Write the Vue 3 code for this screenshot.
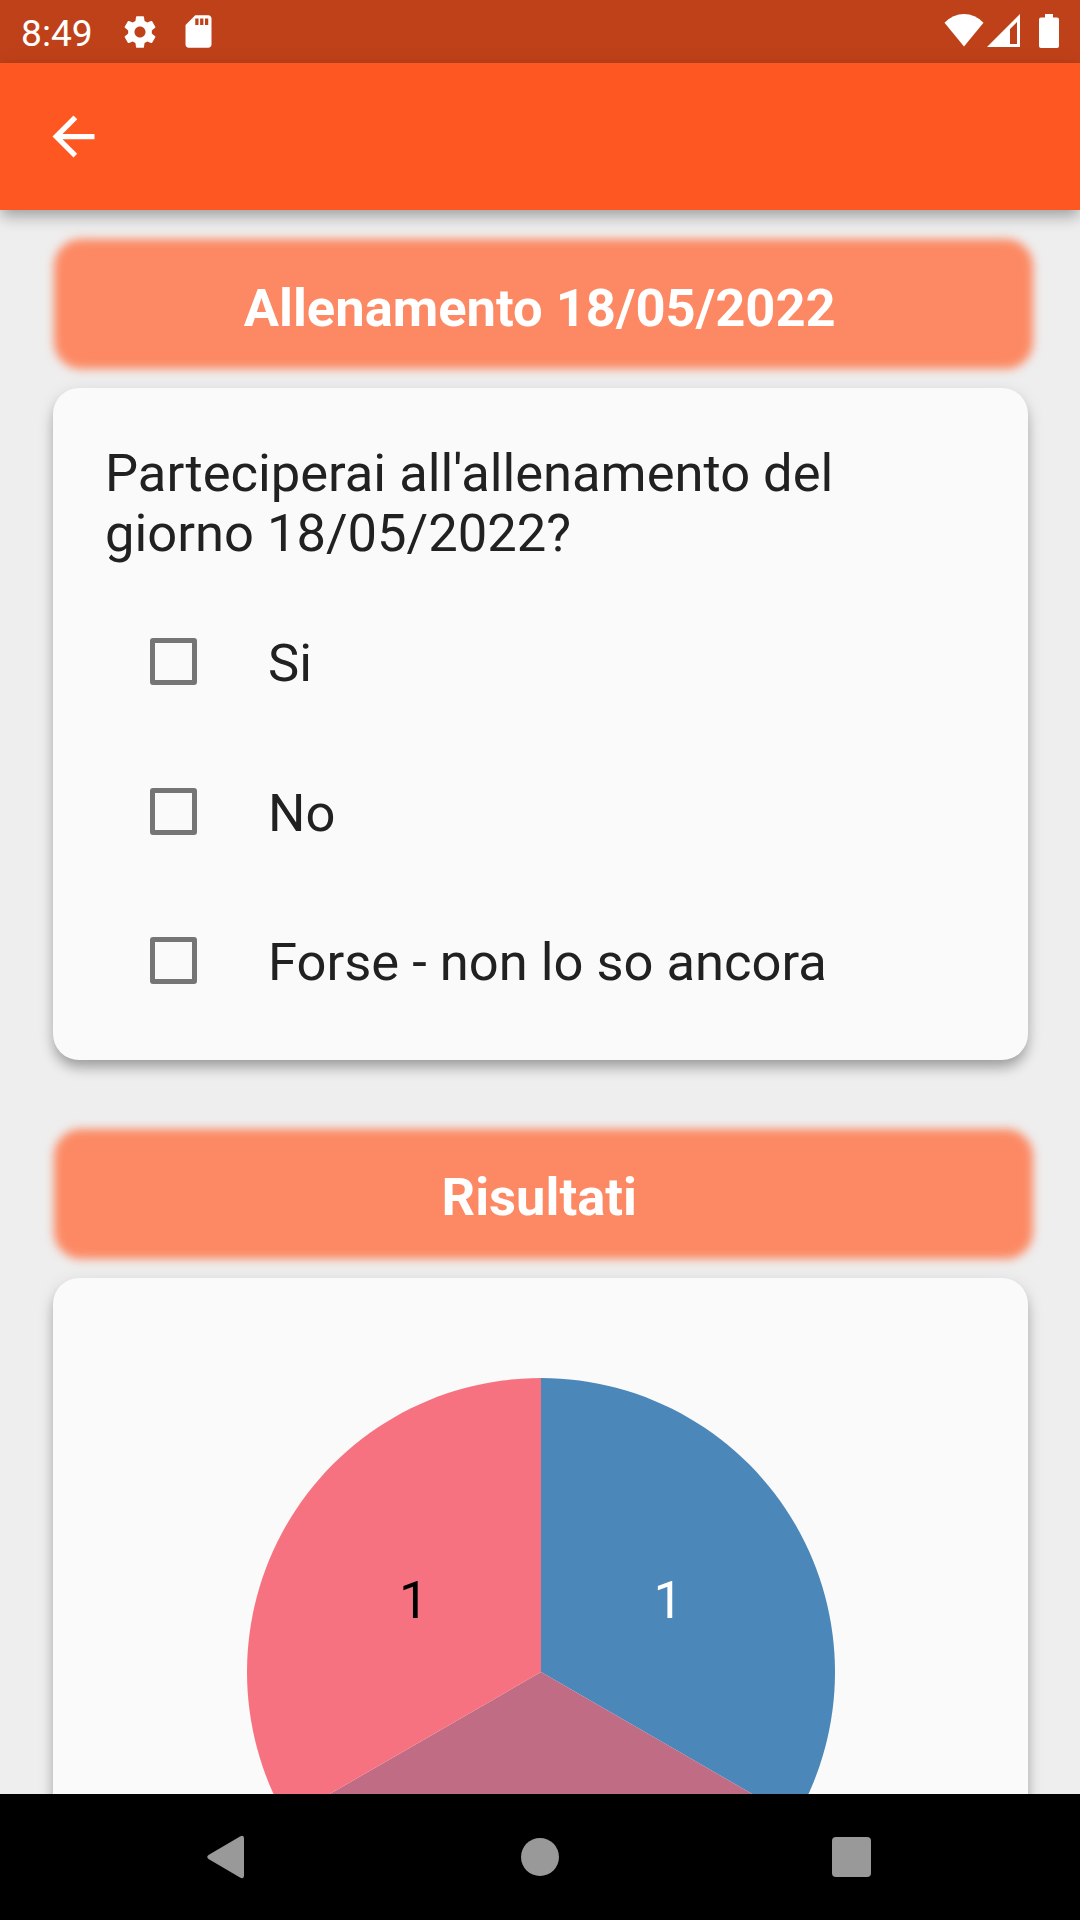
<script setup>
const options = ['Si', 'No', 'Forse - non lo so ancora']

const radius = 294
const votes = [
  { count: 1, label: true, fill: '#4b87b9', text: '#ffffff' },
  { count: 1, label: false, fill: '#c06c84', text: '#ffffff' },
  { count: 1, label: true, fill: '#f67280', text: '#000000' },
]
const total = votes.reduce((sum, v) => sum + v.count, 0)
let angle = 0
const slices = votes.map((v) => {
  const start = angle
  angle += (v.count / total) * Math.PI * 2
  const mid = (start + angle) / 2
  const at = (a, r) => [Math.sin(a) * r, -Math.cos(a) * r]
  const [x1, y1] = at(start, radius)
  const [x2, y2] = at(angle, radius)
  const [lx, ly] = at(mid, radius / 2)
  return {
    ...v,
    d: `M0 0L${x1} ${y1}A${radius} ${radius} 0 0 1 ${x2} ${y2}Z`,
    lx,
    ly: ly + 19,
  }
})
const labelled = slices.filter((s) => s.label)
</script>

<template>
  <div class="screen">
    <header class="status">
      <span class="clock">8:49</span>
      <svg class="gear" width="38" height="38" viewBox="0 0 24 24">
        <path fill="#fff" d="M19.43 12.98c.04-.32.07-.64.07-.98s-.03-.66-.07-.98l2.11-1.65c.19-.15.24-.42.12-.64l-2-3.46c-.12-.22-.39-.3-.61-.22l-2.49 1c-.52-.4-1.08-.73-1.69-.98l-.38-2.65C14.46 2.18 14.25 2 14 2h-4c-.25 0-.46.18-.49.42l-.38 2.65c-.61.25-1.17.59-1.69.98l-2.49-1c-.23-.09-.49 0-.61.22l-2 3.46c-.13.22-.07.49.12.64l2.11 1.65c-.04.32-.07.65-.07.98s.03.66.07.98l-2.11 1.65c-.19.15-.24.42-.12.64l2 3.46c.12.22.39.3.61.22l2.49-1c.52.4 1.08.73 1.69.98l.38 2.65c.03.24.24.42.49.42h4c.25 0 .46-.18.49-.42l.38-2.65c.61-.25 1.17-.59 1.69-.98l2.49 1c.23.09.49 0 .61-.22l2-3.46c.12-.22.07-.49-.12-.64l-2.11-1.65zM12 15.5c-1.93 0-3.5-1.57-3.5-3.5s1.57-3.5 3.5-3.5 3.5 1.57 3.5 3.5-1.57 3.5-3.5 3.5z" />
      </svg>
      <svg class="sd" width="39" height="39" viewBox="0 0 24 24">
        <path fill="#fff" d="M18 2h-8L4.02 8 4 20c0 1.1.9 2 2 2h12c1.1 0 2-.9 2-2V4c0-1.1-.9-2-2-2zm-6 6h-2V4h2v4zm3 0h-2V4h2v4zm3 0h-2V4h2v4z" />
      </svg>
      <span class="spacer"></span>
      <svg class="wifi" width="40" height="34" viewBox="0 0 40 34">
        <path fill="#fff" d="M20 33.5L.5 9.7Q9 1 20 1T39.5 9.7Z" />
      </svg>
      <svg class="signal" width="33" height="33" viewBox="0 0 33 33">
        <path fill="#fff" fill-rule="evenodd" d="M33 0V33H0ZM30 8L23 15V30H30Z" />
      </svg>
      <svg class="battery" width="20" height="34" viewBox="0 0 20 34">
        <path fill="#fff" d="M6 0h8v3.5h4q2 0 2 2V32q0 2-2 2H2q-2 0-2-2V5.5q0-2 2-2h4z" />
      </svg>
    </header>

    <nav class="appbar">
      <svg width="63" height="63" viewBox="0 0 24 24">
        <path fill="#fff" d="M20 11H7.83l5.59-5.59L12 4l-8 8 8 8 1.41-1.41L7.83 13H20v-2z" />
      </svg>
    </nav>

    <main class="content">
      <section>
        <h2 class="banner"><span>Allenamento 18/05/2022</span></h2>
        <div class="card">
          <p class="question">Parteciperai all'allenamento del giorno 18/05/2022?</p>
          <div v-for="o in options" :key="o" class="option">
            <span class="box"></span>
            <span class="label">{{ o }}</span>
          </div>
        </div>
      </section>
      <section>
        <h2 class="banner summary"><span>Risultati</span></h2>
        <div class="card results">
          <svg width="588" height="588" viewBox="-294 -294 588 588">
            <path v-for="(s, i) in slices" :key="i" :d="s.d" :fill="s.fill" />
            <text v-for="(s, i) in labelled" :key="'t' + i" :x="s.lx" :y="s.ly" :fill="s.text" text-anchor="middle">{{ s.count }}</text>
          </svg>
        </div>
      </section>
    </main>

    <footer class="navbar">
      <svg width="38" height="44" viewBox="0 0 38 44">
        <path fill="#999" d="M33 1.5Q37 -.5 37 3.5V40.5Q37 44.5 33 42.5L1.5 24Q-1 22 1.5 20Z" />
      </svg>
      <span class="home"></span>
      <span class="recent"></span>
    </footer>
  </div>
</template>

<style>
body {
  margin: 0;
}
</style>

<style scoped>
.screen {
  width: 1080px;
  height: 1920px;
  display: flex;
  flex-direction: column;
  overflow: hidden;
  background: #eee;
  font-family: Roboto, sans-serif;
  font-size: 52.5px;
  color: #212121;
}
.status {
  flex: none;
  height: 63px;
  display: flex;
  align-items: flex-start;
  background: #bf4119;
  color: #fff;
}
.clock {
  width: 71.5px;
  margin-left: 21px;
  font-size: 37.2px;
  line-height: 66px;
  white-space: nowrap;
}
.gear {
  margin: 12.5px 0 0 28.5px;
}
.sd {
  margin: 12px 0 0 19.5px;
}
.spacer {
  flex: 1;
}
.wifi {
  margin: 13px 3px 0 0;
}
.signal {
  margin: 14px 19px 0 0;
}
.battery {
  margin: 14px 21px 0 0;
}
.appbar {
  flex: none;
  height: 147px;
  display: flex;
  align-items: center;
  padding-left: 42px;
  box-sizing: border-box;
  background: #ff5722;
  position: relative;
  z-index: 1;
  box-shadow: 0 6px 12px -3px rgba(0, 0, 0, 0.2), 0 10px 14px rgba(0, 0, 0, 0.11), 0 3px 20px rgba(0, 0, 0, 0.09);
}
.appbar svg {
  margin-top: -1px;
}
.content {
  flex: 1;
  min-height: 0;
  overflow: hidden;
}
section {
  height: 860.5px;
  padding-top: 29px;
}
.banner {
  margin: 0 47.5px 19px 54px;
  height: 130px;
  display: flex;
  justify-content: center;
  position: relative;
  font-size: 52.5px;
  font-weight: 700;
  line-height: 138px;
  color: #fff;
  isolation: isolate;
}
.banner::before {
  content: '';
  position: absolute;
  z-index: -1;
  inset: 0;
  border-radius: 27px;
  background: #fc8963;
  filter: blur(5px);
}
.banner span {
  margin-right: 7px;
}
.summary {
  line-height: 136px;
}
.summary span {
  margin-right: 8px;
}
.card {
  box-sizing: border-box;
  height: 672px;
  margin: 0 52.5px;
  padding: 55px 52.5px 0;
  border-radius: 26px;
  background: #fafafa;
  box-shadow: 0 8px 12px -3px rgba(0, 0, 0, 0.2), 0 10px 14px rgba(0, 0, 0, 0.12), 0 3px 18px rgba(0, 0, 0, 0.09);
}
.question {
  margin: 0 0 24px;
  line-height: 60px;
}
.option {
  height: 149.6px;
  display: flex;
  align-items: center;
}
.box {
  box-sizing: border-box;
  width: 47px;
  height: 47px;
  margin: 0 71px 0 45px;
  border: 5px solid #757575;
  border-radius: 3px;
}
.label {
  line-height: 60px;
  padding-top: 2.6px;
}
.results {
  height: 900px;
  padding: 100.5px 0 0 1px;
  display: flex;
  justify-content: center;
  align-items: flex-start;
}
.results text {
  font-size: 52.5px;
}
.navbar {
  flex: none;
  height: 126px;
  box-sizing: border-box;
  padding: 0 209px 0 206.5px;
  display: flex;
  align-items: center;
  justify-content: space-between;
  background: #000;
}
.home {
  width: 38.5px;
  height: 38.5px;
  margin-left: 3.5px;
  border-radius: 50%;
  background: #999;
}
.recent {
  width: 39.5px;
  height: 40px;
  border-radius: 4px;
  background: #999;
}
</style>
